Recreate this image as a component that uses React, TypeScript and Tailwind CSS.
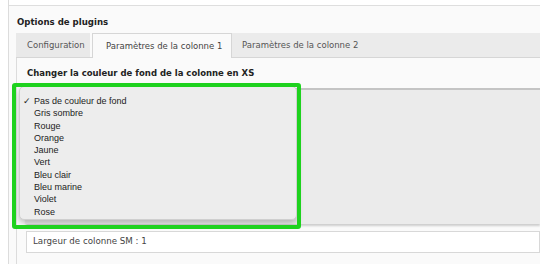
const items = [
  "Pas de couleur de fond",
  "Gris sombre",
  "Rouge",
  "Orange",
  "Jaune",
  "Vert",
  "Bleu clair",
  "Bleu marine",
  "Violet",
  "Rose",
];

export default function App() {
  return (
    <div className="w-[540px] h-[264px] overflow-hidden bg-[#fafafa] flex font-['DejaVu_Sans',sans-serif] text-[#333]">
      {/* left gutter */}
      <div className="w-[9px] shrink-0 bg-white border-r border-[#dcdcdc]" />

      <div className="flex-1 flex flex-col min-w-0">
        <div className="h-[6px] shrink-0 bg-white border-b border-[#dedede]" />

        {/* section title */}
        <div className="pl-[8px] pt-[11px] h-[27px] text-[8.6px] font-bold leading-[11px] text-[#222]">
          Options de plugins
        </div>

        {/* tabs */}
        <div className="pl-[7px] flex items-end h-[25px] shrink-0 text-[8.5px] leading-none">
          <div className="h-[25px] w-[74px] flex items-center pl-[11px] bg-[#e9e9e9] border-b border-[#d6d6d6] text-[#555]">
            Configuration
          </div>
          <div className="w-[2px] h-[25px] border-b border-[#d6d6d6]" />
          <div className="h-[25px] w-[140px] flex items-center pl-[13px] bg-[#fafafa] border border-b-0 border-[#d6d6d6] text-[#444]">
            Paramètres de la colonne 1
          </div>
          <div className="flex-1 h-[25px] flex items-center pl-[10px] bg-[#ebebeb] border-b border-[#d6d6d6] text-[#555] whitespace-nowrap">
            Paramètres de la colonne 2
          </div>
        </div>

        {/* panel */}
        <div className="ml-[7px] flex-1 border-l border-[#dcdcdc] pl-[10px] flex flex-col">
          <div className="pt-[10px] h-[30px] text-[8.5px] font-bold leading-[11px] text-[#222] whitespace-nowrap">
            Changer la couleur de fond de la colonne en XS
          </div>

          {/* opened select */}
          <div className="relative -ml-px h-[140px] shrink-0">
            <div className="h-[136px] bg-[#ebebeb] border-t-2 border-[#c4c4c4] shadow-[0_2px_2px_rgba(0,0,0,0.18)]" />

            <div className="absolute left-[-7px] top-[-2px] w-[278px] h-[134px] rounded-[5px] bg-[#ededed] border border-[#cfcfcf] shadow-[0_3px_6px_rgba(0,0,0,0.25)] pt-[8px] font-['Liberation_Sans',sans-serif] text-[9px] leading-[12.3px] text-[#222]">
              {items.map((it, i) => (
                <div key={it} className="relative pl-[14px] whitespace-nowrap">
                  {i === 0 && <span className="absolute left-[3px] top-0 font-['DejaVu_Sans',sans-serif]">✓</span>}
                  {it}
                </div>
              ))}
            </div>

            <div className="absolute left-[-14px] top-[-5px] w-[289px] h-[146px] rounded-[3px] border-[4px] border-[#1ed21e]" />
          </div>

          <div className="mt-[3px] -ml-px h-[22px] shrink-0 bg-white border border-[#d8d8d8] flex items-center pl-[6px] text-[8.7px] text-[#444] whitespace-nowrap">
            Largeur de colonne SM : 1
          </div>
        </div>
      </div>
    </div>
  );
}
